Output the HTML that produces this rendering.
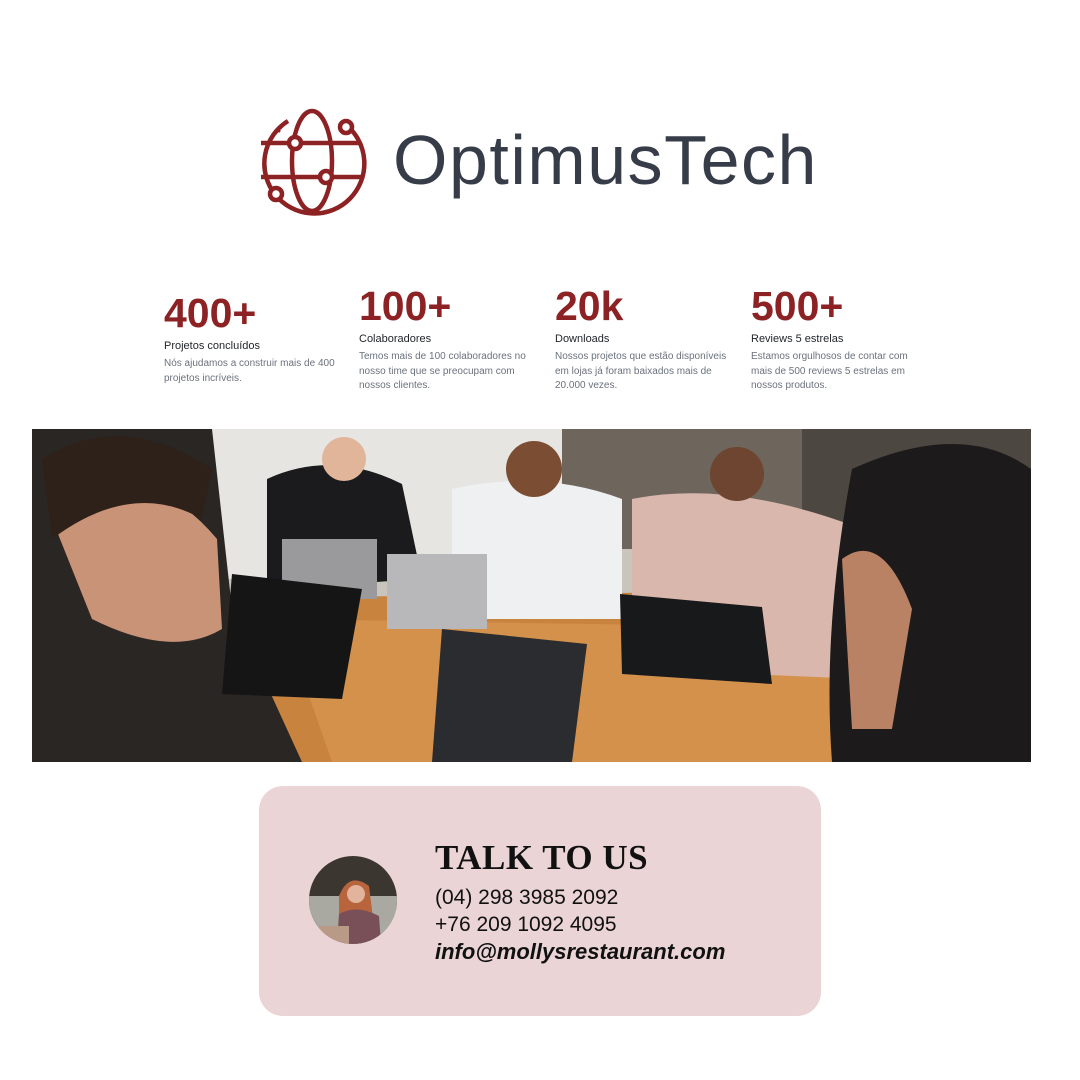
<!DOCTYPE html>
<html><head><meta charset="utf-8"><style>
*{margin:0;padding:0;box-sizing:border-box}
body{width:1080px;height:1080px;background:#fff;position:relative;overflow:hidden;font-family:"Liberation Sans",sans-serif}
.abs{position:absolute}
.brand{left:393px;top:120px;font-size:70px;color:#373c49;letter-spacing:1.5px;line-height:80px}
.stat .n{font-size:41px;color:#8c2224;line-height:40px;font-weight:bold}
.stat .t{font-size:11px;color:#1f2328;margin-top:6px;line-height:14px}
.stat .d{font-size:10px;color:#6b717c;line-height:14.5px;margin-top:4px;width:176px}
.card{left:259px;top:786px;width:562px;height:230px;background:#ead4d5;border-radius:24px}
</style></head><body>
<svg class="abs" style="left:255px;top:105px" width="112" height="112" viewBox="0 0 112 112" fill="none" stroke="#8c2224" stroke-width="4.5">
<path d="M33 16 A50 50 0 1 0 90 19"/>
<circle cx="24" cy="26" r="1.5" fill="#8c2224" stroke="none"/>
<ellipse cx="57" cy="56" rx="20" ry="50"/>
<line x1="6" y1="38" x2="106" y2="38"/><line x1="6" y1="72" x2="106" y2="72"/>
<circle cx="40" cy="38" r="6" fill="#fff"/>
<circle cx="71" cy="72" r="6" fill="#fff"/>
<circle cx="91" cy="22" r="6" fill="#fff"/>
<circle cx="21" cy="89" r="6" fill="#fff"/>
</svg>
<div class="abs brand">OptimusTech</div>

<div class="abs stat" style="left:164px;top:293px"><div class="n">400+</div><div class="t">Projetos concluídos</div><div class="d">Nós ajudamos a construir mais de 400 projetos incríveis.</div></div>
<div class="abs stat" style="left:359px;top:286px"><div class="n">100+</div><div class="t">Colaboradores</div><div class="d">Temos mais de 100 colaboradores no nosso time que se preocupam com nossos clientes.</div></div>
<div class="abs stat" style="left:555px;top:286px"><div class="n">20k</div><div class="t">Downloads</div><div class="d">Nossos projetos que estão disponíveis em lojas já foram baixados mais de 20.000 vezes.</div></div>
<div class="abs stat" style="left:751px;top:286px"><div class="n">500+</div><div class="t">Reviews 5 estrelas</div><div class="d">Estamos orgulhosos de contar com mais de 500 reviews 5 estrelas em nossos produtos.</div></div>

<svg class="abs" style="left:32px;top:429px" width="999" height="333" viewBox="0 0 999 333">
<rect width="999" height="333" fill="#c9c5bd"/>
<rect x="180" y="0" width="360" height="150" fill="#e6e5e1"/>
<rect x="530" y="0" width="240" height="120" fill="#6e655c"/>
<rect x="770" y="0" width="229" height="110" fill="#4c4740"/>
<path d="M150 170 L880 160 L900 333 L120 333 Z" fill="#c8843f"/>
<path d="M250 190 L860 200 L880 333 L300 333 Z" fill="#d4914c"/>
<path d="M235 50 Q300 20 370 55 L390 150 L235 160 Z" fill="#1b1b1d"/>
<circle cx="312" cy="30" r="22" fill="#e0b59a"/>
<path d="M420 60 Q510 40 590 70 L590 190 L420 190 Z" fill="#eef0f2"/>
<circle cx="502" cy="40" r="28" fill="#7b4e34"/>
<path d="M600 70 Q700 50 830 100 L830 250 L600 240 Z" fill="#d9b7ad"/>
<circle cx="705" cy="45" r="27" fill="#6d4530"/>
<path d="M0 0 L180 0 L200 180 L270 333 L0 333 Z" fill="#2a2623"/>
<path d="M20 90 Q110 20 185 110 L190 200 Q140 230 60 190 Z" fill="#c89376"/>
<path d="M10 30 Q90 -20 180 40 L170 90 Q100 50 20 110 Z" fill="#2e211a"/>
<path d="M820 40 Q930 -10 999 40 L999 333 L800 333 Q790 200 820 40 Z" fill="#1c1a1a"/>
<path d="M810 130 Q850 100 880 180 L860 300 L820 300 Z" fill="#b98264"/>
<rect x="250" y="110" width="95" height="60" fill="#9a9a9c"/>
<rect x="355" y="125" width="100" height="75" fill="#b8b8ba"/>
<path d="M200 145 L330 160 L310 270 L190 265 Z" fill="#151516"/>
<path d="M410 200 L555 215 L540 333 L400 333 Z" fill="#2b2c2f"/>
<path d="M588 165 L730 178 L740 255 L590 245 Z" fill="#18191b"/>
</svg>

<div class="abs card"></div>
<svg class="abs" style="left:309px;top:856px" width="88" height="88" viewBox="0 0 88 88">
<defs><clipPath id="c"><circle cx="44" cy="44" r="44"/></clipPath></defs>
<g clip-path="url(#c)">
<rect width="88" height="88" fill="#3c3630"/>
<rect x="0" y="40" width="88" height="48" fill="#a9a9a2"/>
<path d="M30 40 Q40 15 60 30 L65 70 L30 75 Z" fill="#b8643d"/>
<circle cx="47" cy="38" r="9" fill="#e2b49c"/>
<path d="M30 58 Q48 48 70 60 L72 88 L28 88 Z" fill="#7a5058"/>
<rect x="10" y="70" width="30" height="18" fill="#b89a86"/>
</g></svg>
<div class="abs" style="left:435px;top:838px;font-family:'Liberation Serif',serif;font-weight:bold;font-size:35px;letter-spacing:0.5px;color:#111;line-height:40px">TALK TO US</div>
<div class="abs" style="left:435px;top:884px;font-size:21px;color:#111;line-height:27px">(04) 298 3985 2092<br>+76 209 1092 4095<br><b><i style="font-size:22px">info@mollysrestaurant.com</i></b></div>
</body></html>
